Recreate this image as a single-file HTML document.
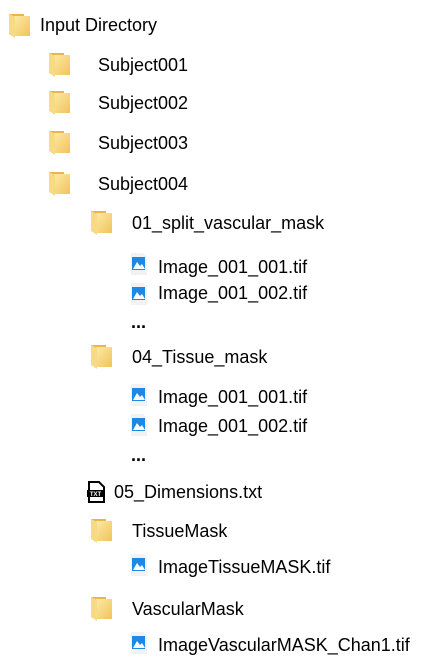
<!DOCTYPE html>
<html><head><style>
body{margin:0;width:435px;height:671px;background:#fff;position:relative;overflow:hidden;font-family:"Liberation Sans",sans-serif;font-size:18px;color:#000}
.t{position:absolute;line-height:20px;white-space:nowrap}
.f{position:absolute;width:23px;height:28px}
.i{position:absolute;width:18px;height:24px}
</style></head><body>
<svg width="0" height="0" style="position:absolute">
<defs>
<linearGradient id="g" x1="0" y1="0" x2="1" y2="1"><stop offset="0" stop-color="#fde9a6"/><stop offset="1" stop-color="#efc45a"/></linearGradient>
<symbol id="fold" viewBox="0 0 23 28"><path d="M1 2h15v20H1z" fill="#e8b64a"/><path d="M6 4h16v20H6z" fill="url(#g)"/><path d="M1 2l6 3v21l-6-4z" fill="#f6da85"/></symbol>
<symbol id="img" viewBox="0 0 18 24"><path d="M1 1h12l4 4v18H1z" fill="#f2f2f2"/><rect x="2" y="5" width="13" height="13" fill="#1e88e5"/><path d="M3 17l4-7 3 4 2-2 3 5z" fill="#fff"/></symbol>
</defs></svg>

<svg class="f" style="left:8px;top:12px"><use href="#fold"/></svg>
<div class="t" style="left:40px;top:15px">Input Directory</div>

<svg class="f" style="left:48px;top:51px"><use href="#fold"/></svg>
<div class="t" style="left:98px;top:55px">Subject001</div>
<svg class="f" style="left:48px;top:89px"><use href="#fold"/></svg>
<div class="t" style="left:98px;top:93px">Subject002</div>
<svg class="f" style="left:48px;top:129px"><use href="#fold"/></svg>
<div class="t" style="left:98px;top:133px">Subject003</div>
<svg class="f" style="left:48px;top:170px"><use href="#fold"/></svg>
<div class="t" style="left:98px;top:174px">Subject004</div>

<svg class="f" style="left:90px;top:209px"><use href="#fold"/></svg>
<div class="t" style="left:132px;top:213px">01_split_vascular_mask</div>
<svg class="i" style="left:130px;top:252px"><use href="#img"/></svg>
<div class="t" style="left:158px;top:257px">Image_001_001.tif</div>
<svg class="i" style="left:130px;top:282px"><use href="#img"/></svg>
<div class="t" style="left:158px;top:283px">Image_001_002.tif</div>
<div class="t" style="left:131px;top:312px;font-weight:bold">...</div>

<svg class="f" style="left:90px;top:343px"><use href="#fold"/></svg>
<div class="t" style="left:132px;top:347px">04_Tissue_mask</div>
<svg class="i" style="left:130px;top:383px"><use href="#img"/></svg>
<div class="t" style="left:158px;top:387px">Image_001_001.tif</div>
<svg class="i" style="left:130px;top:413px"><use href="#img"/></svg>
<div class="t" style="left:158px;top:416px">Image_001_002.tif</div>
<div class="t" style="left:131px;top:445px;font-weight:bold">...</div>

<svg style="position:absolute;left:85px;top:480px" width="22" height="24" viewBox="0 0 22 24"><path d="M4 2h10l5 5v15H4z" fill="#fff" stroke="#000" stroke-width="2"/><rect x="2" y="10" width="17" height="7" fill="#000"/><text x="10.5" y="16" font-size="6" fill="#fff" text-anchor="middle" font-family="Liberation Sans" font-weight="bold">TXT</text></svg>
<div class="t" style="left:114px;top:482px">05_Dimensions.txt</div>

<svg class="f" style="left:90px;top:517px"><use href="#fold"/></svg>
<div class="t" style="left:132px;top:521px">TissueMask</div>
<svg class="i" style="left:130px;top:553px"><use href="#img"/></svg>
<div class="t" style="left:158px;top:557px">ImageTissueMASK.tif</div>

<svg class="f" style="left:90px;top:595px"><use href="#fold"/></svg>
<div class="t" style="left:132px;top:599px">VascularMask</div>
<svg class="i" style="left:130px;top:631px"><use href="#img"/></svg>
<div class="t" style="left:158px;top:635px">ImageVascularMASK_Chan1.tif</div>
</body></html>
